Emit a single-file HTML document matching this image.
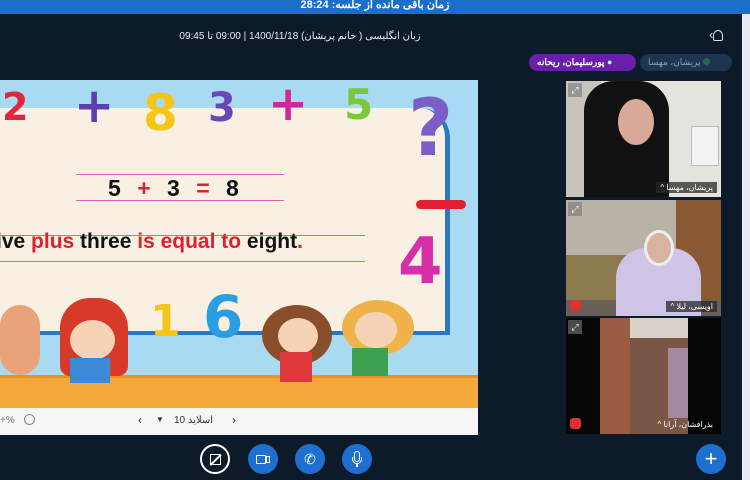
<!DOCTYPE html>
<html><head><meta charset="utf-8"><style>
*{margin:0;padding:0;box-sizing:border-box}
body{width:750px;height:480px;overflow:hidden;background:#0d1a2a;font-family:"Liberation Sans","Noto Sans CJK SC",sans-serif;position:relative}
.abs{position:absolute}
.top{left:0;top:0;width:750px;height:14px;background:#1b6fc9;color:#fff;font-size:11px;font-weight:bold;text-align:center;line-height:11px}
.title{top:31px;left:0;width:600px;text-align:center;color:#e8edf2;font-size:10px}
.pill{top:54px;height:17px;border-radius:9px;font-size:9px;line-height:17px;padding:0 8px}
.slide{left:0;top:80px;width:478px;height:328px;background:#a8dbf2;overflow:hidden}
.board{left:-10px;top:28px;width:460px;height:227px;background:#f8f0e2;border-right:5px solid #2a78c0;border-bottom:4px solid #2a78c0;border-radius:0 30px 0 0}
.num{font-weight:bold;font-family:"DejaVu Sans","Liberation Sans",sans-serif;line-height:1}
.floor{left:0;top:295px;width:478px;height:33px;background:#f6a93b;border-top:3px solid #f08f20}
.bar{left:0;top:408px;width:478px;height:27px;background:#f4f6f8;color:#333;font-size:10px}
.tile{left:566px;width:155px;height:116px;overflow:hidden}
.lbl{position:absolute;right:4px;bottom:4px;background:rgba(40,40,40,.75);color:#fff;font-size:8px;padding:1px 4px}
.exp{position:absolute;left:2px;top:2px;width:14px;height:14px;background:rgba(120,120,120,.6);color:#fff;font-size:9px;text-align:center;line-height:14px}
.btn{top:444px;width:30px;height:30px;border-radius:50%;background:#1e6fd0}
</style></head><body>
<div class="abs top">زمان باقی مانده از جلسه: 28:24</div>
<div class="abs title">زبان انگلیسی ( خانم پریشان) 1400/11/18 | 09:00 تا 09:45</div>
<div class="abs" style="left:709px;top:27px;color:#dde;font-size:13px">‹<span style="display:inline-block;width:10px;height:11px;border:1.5px solid #dde;border-radius:50% 50% 2px 2px;vertical-align:middle"></span></div>
<div class="abs pill" style="left:640px;width:92px;background:#1d3550;color:#8aa0b8">پریشان، مهسا <span style="display:inline-block;width:7px;height:7px;border-radius:50%;background:#1f6b55"></span></div>
<div class="abs pill" style="left:529px;width:107px;background:#6a1fa8;color:#fff;font-weight:bold">پورسلیمان، ریحانه <span style="color:#9fe">●</span></div>
<div class="abs" style="left:742px;top:14px;width:8px;height:466px;background:#e9edf1"></div>

<div class="abs slide">
 <div class="abs board"></div>
 <div class="abs num" style="left:2px;top:8px;font-size:38px;color:#e0283c">2</div>
 <div class="abs num" style="left:74px;top:2px;font-size:48px;color:#5b3fb0">+</div>
 <div class="abs num" style="left:143px;top:8px;font-size:50px;color:#f5c518">8</div>
 <div class="abs num" style="left:208px;top:8px;font-size:40px;color:#6a47b8">3</div>
 <div class="abs num" style="left:268px;top:0px;font-size:48px;color:#d02898">+</div>
 <div class="abs num" style="left:344px;top:4px;font-size:42px;color:#7cc83c">5</div>
 <div class="abs num" style="left:408px;top:10px;font-size:78px;color:#7b5fc8">?</div>
 <div class="abs" style="left:416px;top:120px;width:50px;height:9px;border-radius:5px;background:#e02030"></div>
 <div class="abs num" style="left:398px;top:150px;font-size:64px;color:#d62fa8">4</div>
 <div class="abs num" style="left:150px;top:220px;font-size:44px;color:#f5c518">1</div>
 <div class="abs num" style="left:203px;top:208px;font-size:58px;color:#2a9ee0">6</div>
 <div class="abs" style="left:76px;top:94px;width:208px;height:27px;border-top:1px solid #e060c0;border-bottom:1px solid #e060c0"></div>
 <div class="abs" style="left:108px;top:95px;font-size:23px;font-weight:bold;color:#111;letter-spacing:5px">5 <span style="color:#e02030">+</span> 3 <span style="color:#e02030">=</span> 8</div>
 <div class="abs" style="left:0;top:155px;width:365px;height:27px;border-top:1px solid #e060c0;border-bottom:1px solid #e060c0"></div>
 <div class="abs" style="left:-4px;top:150px;font-size:21px;font-weight:bold;color:#111">ive <span style="color:#e02030">plus</span> three <span style="color:#e02030">is equal to</span> eight<span style="color:#e02030">.</span></div>
 <div class="abs floor"></div>
 <div class="abs" style="left:0;top:225px;width:40px;height:70px;border-radius:20px;background:#e9a27a"></div>
 <div class="abs" style="left:60px;top:218px;width:68px;height:78px;border-radius:30px 30px 10px 10px;background:#d83a2a"></div>
 <div class="abs" style="left:70px;top:240px;width:45px;height:40px;border-radius:50%;background:#f6d3b6"></div>
 <div class="abs" style="left:70px;top:278px;width:40px;height:25px;background:#3a8ad8"></div>
 <div class="abs" style="left:262px;top:225px;width:70px;height:60px;border-radius:50%;background:#8a4e2a"></div>
 <div class="abs" style="left:278px;top:238px;width:40px;height:36px;border-radius:50%;background:#f6d3b6"></div>
 <div class="abs" style="left:280px;top:272px;width:32px;height:30px;background:#e03838"></div>
 <div class="abs" style="left:342px;top:220px;width:72px;height:55px;border-radius:50%;background:#f0b24a"></div>
 <div class="abs" style="left:355px;top:232px;width:42px;height:36px;border-radius:50%;background:#f6d3b6"></div>
 <div class="abs" style="left:352px;top:268px;width:36px;height:28px;background:#3ca050"></div>
</div>
<div class="abs bar">
 <span class="abs" style="left:0;top:7px;color:#777">+%</span>
 <span class="abs" style="left:24px;top:6px;width:11px;height:11px;border:1px solid #888;border-radius:50%"></span>
 <span class="abs" style="left:138px;top:5px;font-size:12px">‹</span>
 <span class="abs" style="left:156px;top:7px;font-size:8px">▼</span>
 <span class="abs" style="left:174px;top:7px">10 اسلاید</span>
 <span class="abs" style="left:232px;top:5px;font-size:12px">›</span>
</div>

<div class="abs tile" style="top:81px;background:#e6e2de">
 <div class="abs" style="left:0;top:0;width:35px;height:116px;background:#c9c3bd"></div>
 <div class="abs" style="left:18px;top:0;width:85px;height:116px;background:#111;border-radius:30px 30px 0 0"></div>
 <div class="abs" style="left:52px;top:18px;width:36px;height:46px;border-radius:50%;background:#d9a99a"></div>
 <div class="abs" style="left:125px;top:45px;width:28px;height:40px;background:#f2f2f2;border:1px solid #bbb"></div>
 <div class="exp">⤢</div><div class="lbl">^ پریشان، مهسا</div>
</div>
<div class="abs tile" style="top:200px;background:#b9b2a6">
 <div class="abs" style="left:110px;top:0;width:45px;height:116px;background:#8a5a34"></div>
 <div class="abs" style="left:0;top:55px;width:70px;height:45px;background:#8b7a4e"></div>
 <div class="abs" style="left:0;top:100px;width:155px;height:16px;background:#6a5e58"></div>
 <div class="abs" style="left:50px;top:48px;width:85px;height:68px;border-radius:30px 30px 0 0;background:#cfc4e6"></div>
 <div class="abs" style="left:78px;top:30px;width:30px;height:36px;border-radius:50%;background:#d8b4a0;border:3px solid #eee"></div>
 <div class="exp">⤢</div><div class="abs" style="left:4px;top:100px;width:11px;height:11px;border-radius:3px;background:#e03030"></div><div class="lbl">^ اویسی، لیلا</div>
</div>
<div class="abs tile" style="top:318px;background:#050505">
 <div class="abs" style="left:34px;top:0;width:88px;height:116px;background:#7a5646"></div>
 <div class="abs" style="left:34px;top:0;width:88px;height:20px;background:#d8d2c8"></div>
 <div class="abs" style="left:34px;top:0;width:30px;height:116px;background:#9a5b40"></div>
 <div class="abs" style="left:102px;top:30px;width:20px;height:70px;background:#a48aa0"></div>
 <div class="exp">⤢</div><div class="abs" style="left:4px;top:100px;width:11px;height:11px;border-radius:3px;background:#e03030"></div><div class="lbl" style="background:none">^ بذرافشان، آرانا</div>
</div>

<div class="abs btn" style="left:200px;background:none;border:2px solid #fff"><div style="margin:8px auto;width:11px;height:11px;border:1.5px solid #fff;position:relative"><div style="position:absolute;left:-3px;top:4px;width:15px;height:1.5px;background:#fff;transform:rotate(-45deg)"></div></div></div>
<div class="abs btn" style="left:248px"><div style="position:absolute;left:8px;top:11px;width:10px;height:9px;border:1.5px solid #fff;border-radius:1px"></div><div style="position:absolute;left:18px;top:12px;width:4px;height:7px;border:1.5px solid #fff"></div></div>
<div class="abs btn" style="left:295px;color:#fff;font-size:14px;text-align:center;line-height:30px">✆</div>
<div class="abs btn" style="left:342px"><div style="position:absolute;left:12px;top:7px;width:6px;height:11px;border:1.5px solid #fff;border-radius:3px"></div><div style="position:absolute;left:10px;top:13px;width:10px;height:7px;border:1.5px solid #fff;border-top:none;border-radius:0 0 5px 5px"></div><div style="position:absolute;left:14px;top:20px;width:2px;height:3px;background:#fff"></div></div>
<div class="abs btn" style="left:696px;color:#fff;font-size:22px;text-align:center;line-height:29px">+</div>
</body></html>
